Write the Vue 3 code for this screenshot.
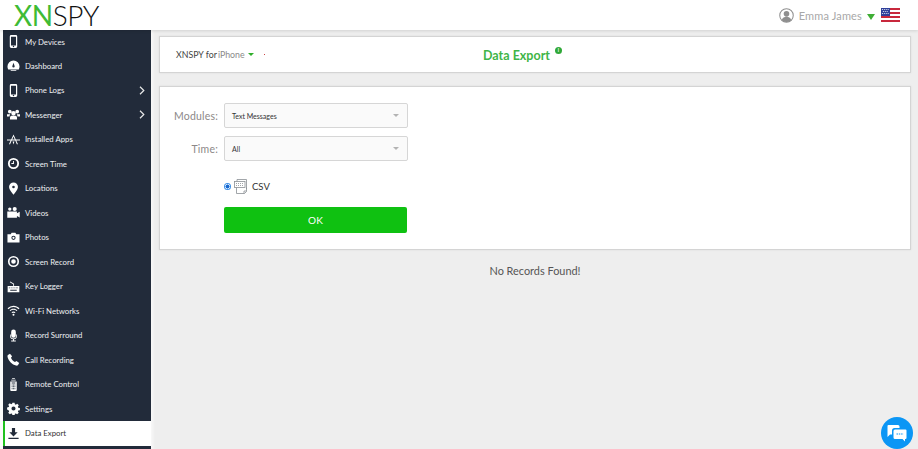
<script setup>
const items = [
  { label: 'My Devices', icon: 'phone' },
  { label: 'Dashboard', icon: 'dash' },
  { label: 'Phone Logs', icon: 'phone', arrow: true },
  { label: 'Messenger', icon: 'users', arrow: true },
  { label: 'Installed Apps', icon: 'apps' },
  { label: 'Screen Time', icon: 'clock' },
  { label: 'Locations', icon: 'pin' },
  { label: 'Videos', icon: 'video' },
  { label: 'Photos', icon: 'camera' },
  { label: 'Screen Record', icon: 'record' },
  { label: 'Key Logger', icon: 'key' },
  { label: 'Wi-Fi Networks', icon: 'wifi' },
  { label: 'Record Surround', icon: 'mic' },
  { label: 'Call Recording', icon: 'call' },
  { label: 'Remote Control', icon: 'remote' },
  { label: 'Settings', icon: 'gear' },
  { label: 'Data Export', icon: 'download', active: true }
]
</script>

<template>
  <div class="page">
    <header class="topbar">
      <div class="logo"><span class="logo-green">XN</span>SPY</div>
      <div class="user">
        <svg class="avatar" width="15" height="15" viewBox="0 0 16 16">
          <circle cx="8" cy="8" r="7.2" fill="none" stroke="#8f8f8f" stroke-width="1.1" />
          <circle cx="8" cy="6.2" r="3" fill="#8f8f8f" />
          <path d="M2.9 13c.8-2.6 2.8-3.6 5.1-3.6s4.300 1 5.100 3.600A7 7 0 0 1 8 15a7 7 0 0 1-5.100-2z" fill="#8f8f8f" />
        </svg>
        <span class="user-name">Emma James</span>
        <span class="caret user-caret"></span>
        <svg class="flag" width="19" height="14" viewBox="0 0 20 14" preserveAspectRatio="none">
          <rect width="20" height="14" fill="#fff" />
          <rect y="0" width="20" height="2" fill="#c8283c" />
          <rect y="4" width="20" height="2" fill="#c8283c" />
          <rect y="8" width="20" height="2" fill="#c8283c" />
          <rect y="12" width="20" height="2" fill="#c8283c" />
          <rect width="9.500" height="8" fill="#2f3f9a" />
          <g fill="#dfe4f5">
            <rect x="1" y="1" width="1" height="1" /><rect x="3" y="1" width="1" height="1" /><rect x="5" y="1" width="1" height="1" /><rect x="7" y="1" width="1" height="1" />
            <rect x="2" y="3" width="1" height="1" /><rect x="4" y="3" width="1" height="1" /><rect x="6" y="3" width="1" height="1" />
            <rect x="1" y="5" width="1" height="1" /><rect x="3" y="5" width="1" height="1" /><rect x="5" y="5" width="1" height="1" /><rect x="7" y="5" width="1" height="1" />
          </g>
        </svg>
      </div>
    </header>

    <div class="body">
      <nav class="sidebar">
        <div v-for="item in items" :key="item.label" class="nav-row" :class="{ active: item.active }">
          <span class="nav-icon">
            <svg width="13" height="13" viewBox="0 0 14 14" fill="currentColor">
              <path v-if="item.icon === 'phone'" fill-rule="evenodd" d="M4.500 0h5A1.500 1.500 0 0 1 11 1.500v11A1.500 1.500 0 0 1 9.500 14h-5A1.500 1.500 0 0 1 3 12.500v-11A1.500 1.500 0 0 1 4.500 0zm-.2 2v9.200h5.400V2zM7 11.700a.8.8 0 1 0 0 1.600.8.8 0 0 0 0-1.600z" />
              <path v-else-if="item.icon === 'dash'" fill-rule="evenodd" d="M7 1.500A6.500 6.500 0 0 1 13.500 8c0 1.200-.3 2.300-.8 3.200H1.300C.8 10.300.5 9.200.5 8A6.500 6.500 0 0 1 7 1.500zM5.700 7.800a1.300 1.300 0 1 0 2.600 0L7 4zM4 12h6v1H4z" />
              <path v-else-if="item.icon === 'users'" d="M3 1.800a2 2 0 1 1 0 4 2 2 0 0 1 0-4zm8 0a2 2 0 1 1 0 4 2 2 0 0 1 0-4zM7 3.300a2.400 2.400 0 1 1 0 4.800 2.400 2.400 0 0 1 0-4.800zM0 6.600h3.500c-.6.800-.8 1.600-.8 2.600H0zm10.500 0H14v2.600h-2.700c0-1-.3-1.800-.8-2.600zM4.300 8.300h5.400c.8.600 1.100 1.400 1.100 2.300v1.900H3.200v-1.900c0-.9.300-1.700 1.100-2.300z" />
              <path v-else-if="item.icon === 'apps'" fill-rule="evenodd" d="M7 1.500 9.500 7H14v1.100h-4l1.800 4h-1.200L8.900 8.100H5.100l-1.800 4H2.100l1.800-4H0V7h4.500zm0 2.400L5.700 7h2.600zM6 9.200h2l-1 3.300z" />
              <path v-else-if="item.icon === 'clock'" fill-rule="evenodd" d="M7 1a6 6 0 1 1 0 12A6 6 0 0 1 7 1zm0 2a4 4 0 1 0 0 8 4 4 0 0 0 0-8zm-.5 1.200h1v3.300H4.700v-1h1.800z" />
              <path v-else-if="item.icon === 'pin'" fill-rule="evenodd" d="M7 .5a4.800 4.800 0 0 1 4.800 4.800c0 3-3 6-4.800 8.400C5.200 11.300 2.200 8.300 2.200 5.300A4.800 4.800 0 0 1 7 .5zM7 4a1.400 1.400 0 1 0 0 2.800A1.400 1.400 0 0 0 7 4z" />
              <path v-else-if="item.icon === 'video'" d="M3 1.500a1.800 1.800 0 1 1 0 3.600 1.800 1.800 0 0 1 0-3.600zm5.300-.5a2.200 2.200 0 1 1 0 4.400 2.200 2.200 0 0 1 0-4.400zM.3 5.800h10.400v2l3-1.700v6.300l-3-1.700v2H.3z" />
              <path v-else-if="item.icon === 'camera'" fill-rule="evenodd" d="M5 2h4l1 1.500h3.500v9H.5v-9H4zm2 3a2.300 2.300 0 1 0 0 4.600A2.300 2.300 0 0 0 7 5zm0 1.100a1.200 1.200 0 1 1 0 2.400 1.200 1.200 0 0 1 0-2.400z" />
              <path v-else-if="item.icon === 'record'" fill-rule="evenodd" d="M7 1a6 6 0 1 1 0 12A6 6 0 0 1 7 1zm0 1.800a4.200 4.200 0 1 0 0 8.400 4.200 4.200 0 0 0 0-8.400zm0 1.700a2.500 2.500 0 1 1 0 5 2.500 2.500 0 0 1 0-5z" />
              <path v-else-if="item.icon === 'key'" fill-rule="evenodd" d="M3.500 1.500 7.600 4v2.500h5.700v6.800H.7V6.500h6V4.500L3 2.300zM2 8v1h1V8zm2 0v1h1V8zm2 0v1h1V8zm2 0v1h1V8zm2 0v1h1.500V8zM3.500 10.500v1.200h7v-1.200z" />
              <path v-else-if="item.icon === 'wifi'" fill-rule="evenodd" d="M7 2c2.400 0 4.700 1 6.400 2.700l-.9.900A7.700 7.700 0 0 0 7 3.300a7.700 7.700 0 0 0-5.500 2.300l-.9-.9A9 9 0 0 1 7 2zm0 3c1.600 0 3 .6 4.200 1.700l-.9.900A4.700 4.700 0 0 0 7 6.300a4.700 4.700 0 0 0-3.300 1.300l-.9-.9C4 5.600 5.400 5 7 5zm0 3c.9 0 1.600.3 2.200.8L8.300 9.700A2 2 0 0 0 7 9.300a2 2 0 0 0-1.300.4l-.9-.9C5.400 8.300 6.100 8 7 8zm0 2.400a1.100 1.100 0 1 1 0 2.200 1.100 1.100 0 0 1 0-2.200z" />
              <path v-else-if="item.icon === 'mic'" d="M7 .5A2.500 2.500 0 0 1 9.500 3v4a2.500 2.500 0 0 1-5 0V3A2.500 2.500 0 0 1 7 .5zM3.300 6h.8v1.200a2.900 2.900 0 0 0 5.800 0V6h.8v1.200A3.700 3.700 0 0 1 7.500 11v1.500h2v1h-5v-1h2V11a3.700 3.700 0 0 1-3.200-3.800z" />
              <path v-else-if="item.icon === 'call'" d="M3.200 .7 5.500 3.500 4.300 5.200c.6 1.800 2.300 3.700 4.300 4.500l1.600-1.200 3 2.300-1.500 2.300c-.5.500-1.200.6-2 .4C5.500 12.300 1.800 8.500.6 4.200.4 3.400.5 2.700 1 2.200z" />
              <path v-else-if="item.icon === 'remote'" fill-rule="evenodd" d="M5.500.2h3V1h-3zM4.500 1.800h5v.8h-5zM3.500 3.700h7v9.200A1.100 1.100 0 0 1 9.400 14H4.600a1.100 1.100 0 0 1-1.100-1.100zM5 7v1h1V7zm1.500 0v1h1V7zM8 7v1h1V7zM5 9v1h1V9zm1.500 0v1h1V9zM8 9v1h1V9zm-3 2v1h1v-1zm1.500 0v1h1v-1zM8 11v1h1v-1zM5 4.800v1h4v-1z" />
              <path v-else-if="item.icon === 'gear'" fill-rule="evenodd" d="M5.800.7h2.400l.3 1.800 1 .4 1.500-1 1.700 1.700-1 1.500.4 1 1.800.3v2.400l-1.800.3-.4 1 1 1.500-1.700 1.700-1.500-1-1 .4-.3 1.800H5.800l-.3-1.800-1-.4-1.500 1-1.700-1.700 1-1.500-.4-1L.1 8.200V5.800l1.800-.3.4-1-1-1.500L3 1.300l1.500 1 1-.4zM7 4.800a2.200 2.200 0 1 0 0 4.400 2.200 2.200 0 0 0 0-4.400z" />
              <path v-else-if="item.icon === 'download'" d="M5.300 1h3.400v4.700h2.800L7 10.200 2.500 5.700h2.800zM1.500 11.500h11V13h-11z" />
            </svg>
          </span>
          <span class="nav-label">{{ item.label }}</span>
          <svg v-if="item.arrow" class="nav-arrow" width="6" height="9" viewBox="0 0 6 9">
            <path d="M1 .8 4.800 4.500 1 8.200" fill="none" stroke="currentColor" stroke-width="1.200" />
          </svg>
        </div>
      </nav>

      <main class="content">
        <section class="card title-card">
          <div class="device">
            <span class="device-for">XNSPY for</span><span class="device-name">iPhone</span>
            <span class="caret device-caret"></span>
            <span class="dot"></span>
          </div>
          <div class="title">
            Data Export
            <span class="info">i</span>
          </div>
        </section>

        <section class="card form-card">
          <div class="field">
            <span class="field-label">Modules:</span>
            <div class="select"><span>Text Messages</span><span class="select-caret"></span></div>
          </div>
          <div class="field">
            <span class="field-label">Time:</span>
            <div class="select"><span>All</span><span class="select-caret"></span></div>
          </div>
          <div class="csv">
            <span class="radio"></span>
            <svg width="15" height="15" viewBox="0 0 15 15" fill="none" stroke="#8a8f94" stroke-width=".8">
              <path d="M3 2.500V.5h9.500v9.500" />
              <rect x=".5" y="2.500" width="10.500" height="6" />
              <path d="M2 4.500h7.500M2 6.500h7.500" stroke-dasharray="1 1" />
              <path d="M2.500 8.500v6h8l2-2v-4M12.500 12h-2.500v2.500" />
            </svg>
            <span class="csv-label">CSV</span>
          </div>
          <button class="ok" type="button">OK</button>
        </section>

        <p class="empty">No Records Found!</p>
      </main>
    </div>

    <div class="chat">
      <svg width="20" height="17" viewBox="0 0 20 17">
        <path d="M1.500 0H11a1.500 1.500 0 0 1 1.500 1.500V3H7.500A2.500 2.500 0 0 0 5 5.500v4H3L.5 12V1A1 1 0 0 1 1.500 0z" fill="#fff" />
        <path d="M8 4.500h10.500a1 1 0 0 1 1 1V13a1 1 0 0 1-1 1H18v2.500L15.500 14H8a1.500 1.500 0 0 1-1.500-1.500V6A1.500 1.500 0 0 1 8 4.500z" fill="#fff" />
        <path d="M9.500 9h7" stroke="#0b96f5" stroke-width="1.200" stroke-dasharray="1.500 .8" />
      </svg>
    </div>
  </div>
</template>

<style scoped>
.page {
  width: 918px;
  height: 449px;
  overflow: hidden;
  position: relative;
  background: #eeeeee;
  font-family: Lato, "Liberation Sans", sans-serif;
}
.topbar {
  height: 30px;
  background: #fff;
  display: flex;
  align-items: center;
  justify-content: space-between;
  padding: 0 18px 0 14px;
  box-sizing: border-box;
  position: relative;
  box-shadow: 0 1px 3px rgba(0, 0, 0, 0.12);
}
.logo {
  font-weight: 300;
  font-size: 28px;
  line-height: 30px;
  color: #111;
  letter-spacing: -0.4px;
}
.logo-green {
  color: #3fbb35;
  font-weight: 400;
}
.user {
  display: flex;
  align-items: center;
}
.avatar { margin-right: 5px; }
.user-name {
  font-size: 11px;
  color: #a8a8a8;
  letter-spacing: 0.15px;
}
.caret {
  width: 0;
  height: 0;
  border-left: 4px solid transparent;
  border-right: 4px solid transparent;
  border-top: 6px solid #3fae35;
}
.user-caret { margin: 3px 6px 0 5px; }
.body {
  display: flex;
  height: 419px;
}
.sidebar {
  width: 151px;
  flex: none;
  background: #222b3a;
  border-left: 3px solid #fbfbfb;
  box-sizing: border-box;
}
.nav-row {
  height: 24.500px;
  display: flex;
  align-items: center;
  color: #eef0f2;
  position: relative;
  box-sizing: border-box;
}
.nav-row:first-child {
  height: 23.500px;
}
.nav-icon {
  width: 13px;
  height: 13px;
  margin: 0 5px 0 4px;
  display: flex;
  color: #fff;
}
.nav-label {
  font-size: 7.800px;
}
.nav-arrow {
  position: absolute;
  left: 136px;
  top: 7.500px;
  color: #e8e8e8;
}
.nav-row.active {
  background: #fff;
  color: #333;
  border-left: 2px solid #1fc11f;
}
.nav-row.active .nav-icon {
  color: #222b3a;
  margin-left: 2px;
}
.content {
  flex: 1;
  min-width: 0;
  padding: 6px 7px 0 8px;
  box-shadow: inset 4px 0 3px -2px #f8f8f8;
}
.card {
  background: #fff;
  border: 1px solid #d4d4d4;
  box-shadow: 0 0 2px rgba(0, 0, 0, 0.08);
  box-sizing: border-box;
}
.title-card {
  height: 37px;
  display: flex;
  align-items: center;
  position: relative;
  padding-left: 16px;
}
.device {
  display: flex;
  align-items: center;
  font-size: 8.800px;
  color: #444;
  margin-top: -1px;
}
.device-for { margin-right: 1px; }
.device-name { color: #8a8a8a; }
.device-caret {
  border-left-width: 3px;
  border-right-width: 3px;
  border-top-width: 3px;
  margin-left: 3px;
  margin-top: 1px;
  border-top-color: #2fae2a;
}
.dot {
  width: 1px;
  height: 1px;
  background: #c44;
  margin-left: 10px;
}
.title {
  position: absolute;
  left: 323px;
  top: 11px;
  font-size: 12.500px;
  font-weight: 700;
  color: #3fb548;
  line-height: 16px;
  white-space: nowrap;
}
.info {
  position: absolute;
  left: 72px;
  top: -1px;
  width: 7px;
  height: 7px;
  border-radius: 50%;
  background: #2fa838;
  color: #fff;
  font-size: 5px;
  line-height: 7px;
  text-align: center;
}
.form-card {
  margin-top: 13px;
  height: 164px;
  padding: 16px 0 0 14px;
}
.field {
  display: flex;
  align-items: center;
  height: 25px;
  margin-bottom: 8px;
}
.field-label {
  width: 44px;
  flex: none;
  text-align: right;
  font-size: 10.500px;
  color: #8c8888;
  letter-spacing: 0.2px;
}
.select {
  margin-left: 6px;
  width: 184px;
  height: 25px;
  box-sizing: border-box;
  background: #fafafa;
  border: 1px solid #d6d6d6;
  border-radius: 2px;
  display: flex;
  align-items: center;
  justify-content: space-between;
  padding: 0 8px 0 7px;
  font-size: 7px;
  color: #333;
}
.select-caret {
  width: 0;
  height: 0;
  border-left: 3px solid transparent;
  border-right: 3px solid transparent;
  border-top: 3px solid #b3b3b3;
}
.csv {
  display: flex;
  align-items: center;
  margin: 17px 0 0 50px;
  height: 16px;
}
.radio {
  width: 7px;
  height: 7px;
  flex: none;
  border-radius: 50%;
  background: radial-gradient(circle, #1668d0 0 1.800px, #dbe9fa 2.200px, #3b8fe8 3px);
  margin-right: 3px;
}
.csv-label {
  font-size: 9.500px;
  color: #333;
  margin-left: 3px;
}
.ok {
  display: block;
  margin: 13px 0 0 50px;
  width: 183px;
  height: 26px;
  border: 0;
  border-radius: 2px;
  background: #0fc111;
  color: #fff;
  font-family: inherit;
  font-size: 10px;
  letter-spacing: 0.3px;
}
.empty {
  margin: 14px 0 0;
  text-align: center;
  font-size: 10.900px;
  color: #555;
}
.chat {
  position: absolute;
  left: 881px;
  top: 417px;
  width: 32px;
  height: 32px;
  border-radius: 50%;
  background: #0b96f5;
  display: flex;
  align-items: center;
  justify-content: center;
}
</style>
